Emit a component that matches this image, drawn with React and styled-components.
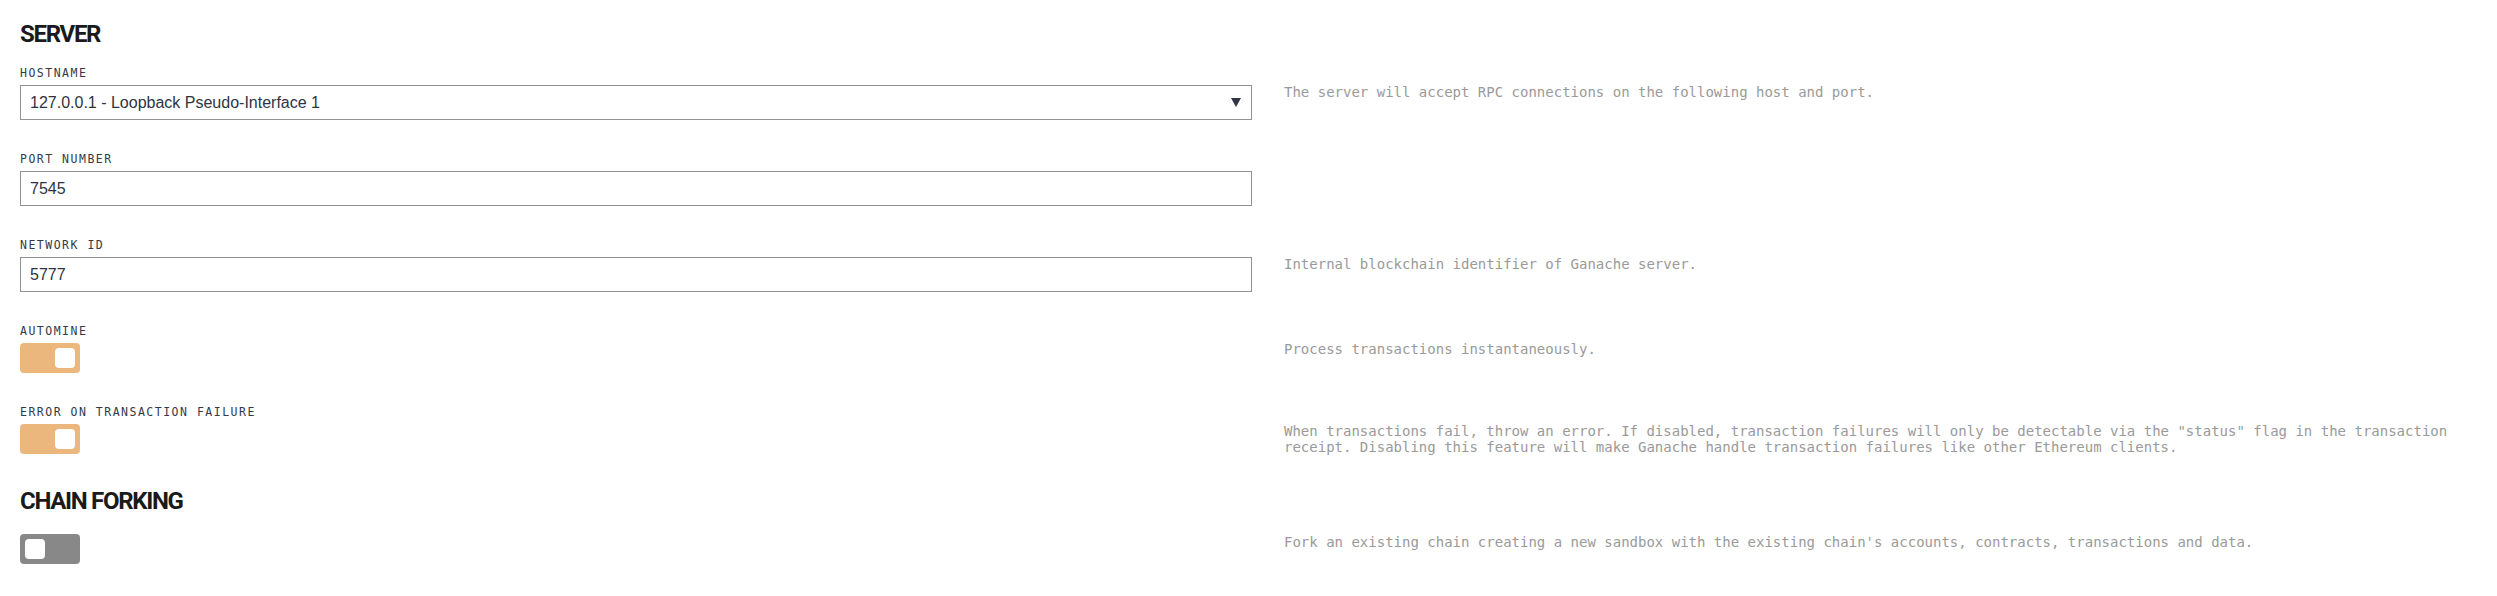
import styled, { createGlobalStyle } from 'styled-components';

const GlobalStyle = createGlobalStyle`
  body {
    margin: 0;
    background: #fff;
  }
`;

const Page = styled.div`
  padding: 0 20px;
  font-family: 'Liberation Sans', Arial, sans-serif;
`;

const Heading = styled.h2`
  margin: ${(p) => (p.$first ? '21px' : '2px')} 0 19px;
  font-family: Roboto, 'Liberation Sans', sans-serif;
  font-weight: 700;
  font-size: 24px;
  line-height: 27px;
  letter-spacing: -1.3px;
  color: #1a1a1a;
`;

const Row = styled.div`
  display: grid;
  grid-template-columns: 1232px 1fr;
  column-gap: 32px;
  align-items: start;
  margin-bottom: 33px;
`;

const Field = styled.div`
  display: flex;
  flex-direction: column;
  align-items: flex-start;
`;

const Label = styled.label`
  display: block;
  margin-bottom: 6px;
  font-family: 'DejaVu Sans Mono', 'Liberation Mono', monospace;
  font-size: 11.5px;
  line-height: 12px;
  letter-spacing: 1.5px;
  color: #343947;
`;

const Input = styled.input`
  box-sizing: border-box;
  width: 100%;
  height: 35px;
  padding: 0 9px;
  border: 1px solid #929292;
  border-radius: 0;
  outline: none;
  font-family: 'Liberation Sans', Arial, sans-serif;
  font-size: 16px;
  color: #2e3444;
  background: #fff;
`;

const SelectBox = styled.div`
  box-sizing: border-box;
  width: 100%;
  height: 35px;
  padding: 0 10px 0 9px;
  border: 1px solid #929292;
  display: flex;
  align-items: center;
  justify-content: space-between;
  font-size: 16px;
  color: #2e3444;
`;

const Arrow = styled.span`
  width: 0;
  height: 0;
  border-left: 5.5px solid transparent;
  border-right: 5.5px solid transparent;
  border-top: 9px solid #2f3545;
`;

const Toggle = styled.div`
  box-sizing: border-box;
  width: 60px;
  height: 30px;
  padding: 5px;
  border-radius: 4px;
  display: flex;
  justify-content: ${(p) => (p.$on ? 'flex-end' : 'flex-start')};
  background: ${(p) => (p.$on ? '#ecb77d' : '#888888')};
`;

const Knob = styled.div`
  width: 20px;
  height: 20px;
  border-radius: 4px;
  background: #fff;
`;

const Description = styled.p`
  margin: 0;
  padding-top: ${(p) => p.$offset}px;
  font-family: 'DejaVu Sans Mono', 'Liberation Mono', monospace;
  font-size: 14px;
  line-height: 16px;
  color: #9a9a9a;
`;

export default function App() {
  return (
    <Page>
      <GlobalStyle />
      <Heading $first>SERVER</Heading>

      <Row>
        <Field>
          <Label>HOSTNAME</Label>
          <SelectBox>
            <span>127.0.0.1 - Loopback Pseudo-Interface 1</span>
            <Arrow />
          </SelectBox>
        </Field>
        <Description $offset={17}>
          The server will accept RPC connections on the following host and port.
        </Description>
      </Row>

      <Row>
        <Field>
          <Label>PORT NUMBER</Label>
          <Input defaultValue="7545" />
        </Field>
        <div />
      </Row>

      <Row>
        <Field>
          <Label>NETWORK ID</Label>
          <Input defaultValue="5777" />
        </Field>
        <Description $offset={17}>Internal blockchain identifier of Ganache server.</Description>
      </Row>

      <Row>
        <Field>
          <Label>AUTOMINE</Label>
          <Toggle $on>
            <Knob />
          </Toggle>
        </Field>
        <Description $offset={16}>Process transactions instantaneously.</Description>
      </Row>

      <Row>
        <Field>
          <Label>ERROR ON TRANSACTION FAILURE</Label>
          <Toggle $on>
            <Knob />
          </Toggle>
        </Field>
        <Description $offset={17}>
          When transactions fail, throw an error. If disabled, transaction failures will only be
          detectable via the "status" flag in the transaction receipt. Disabling this feature will
          make Ganache handle transaction failures like other Ethereum clients.
        </Description>
      </Row>

      <Heading>CHAIN FORKING</Heading>

      <Row>
        <Field>
          <Toggle>
            <Knob />
          </Toggle>
        </Field>
        <Description $offset={-2}>
          Fork an existing chain creating a new sandbox with the existing chain's accounts,
          contracts, transactions and data.
        </Description>
      </Row>
    </Page>
  );
}
